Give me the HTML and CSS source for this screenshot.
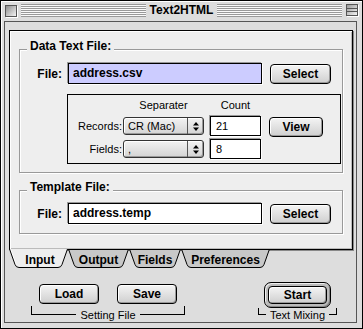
FILE: index.html
```html
<!DOCTYPE html>
<html>
<head>
    <meta charset="UTF-8">
    <title>Text2HTML</title>
    <link rel="stylesheet" href="styles.css">
</head>
<body>
    <div class="window">
        <div class="titlebar">
            <span class="close-box"></span>
            <span class="stripes"></span>
            <span class="title">Text2HTML</span>
            <span class="stripes"></span>
            <span class="collapse-box"></span>
        </div>
        <div class="frame">
            <div class="content">
                <div class="tab-panel">
                    <fieldset class="group">
                        <legend>Data Text File:</legend>
                        <div class="file-row">
                            <label>File:</label>
                            <div class="field selected">address.csv</div>
                            <button class="btn">Select</button>
                        </div>
                        <div class="sep-box">
                            <span></span>
                            <span class="head head-sep">Separater</span>
                            <span class="head head-count">Count</span>
                            <span></span>

                            <label>Records:</label>
                            <div class="popup">
                                <span class="popup-text">CR (Mac)</span>
                                <span class="popup-arrows">
                                    <svg width="6" height="11" viewBox="0 0 6 11"><polygon points="0,4.5 3,1 6,4.5" fill="#000"/><polygon points="0,6.5 3,10 6,6.5" fill="#000"/></svg>
                                </span>
                            </div>
                            <div class="field count">21</div>
                            <button class="btn btn-view">View</button>

                            <label>Fields:</label>
                            <div class="popup">
                                <span class="popup-text">,</span>
                                <span class="popup-arrows">
                                    <svg width="6" height="11" viewBox="0 0 6 11"><polygon points="0,4.5 3,1 6,4.5" fill="#000"/><polygon points="0,6.5 3,10 6,6.5" fill="#000"/></svg>
                                </span>
                            </div>
                            <div class="field count">8</div>
                            <span></span>
                        </div>
                    </fieldset>

                    <fieldset class="group group-template">
                        <legend>Template File:</legend>
                        <div class="file-row">
                            <label>File:</label>
                            <div class="field">address.temp</div>
                            <button class="btn">Select</button>
                        </div>
                    </fieldset>
                </div>

                <div class="tabs">
                    <div class="tab tab-input">
                        <svg width="59" height="19" viewBox="0 0 59 19">
                            <path d="M0.5,0 L6,15.5 Q7,18.5 10,18.5 L49,18.5 Q52,18.5 53,15.5 L58.5,0 Z" fill="#eee"/>
                            <path d="M1.5,0 L7,15.5" stroke="#fff" fill="none"/>
                            <path d="M0.5,0 L6,15.5 Q7,18.5 10,18.5 L49,18.5 Q52,18.5 53,15.5 L58.5,0" stroke="#000" fill="none"/>
                        </svg>
                        <span>Input</span>
                    </div>
                    <div class="tab tab-output">
                        <svg width="61" height="19" viewBox="0 0 61 19">
                            <path d="M0.5,0 L6,15.5 Q7,18.5 10,18.5 L51,18.5 Q54,18.5 55,15.5 L60.5,0 Z" fill="#c8c8c8"/>
                            <path d="M0.5,0 L6,15.5 Q7,18.5 10,18.5 L51,18.5 Q54,18.5 55,15.5 L60.5,0" stroke="#000" fill="none"/>
                            <path d="M0,0.5 H61" stroke="#000"/>
                        </svg>
                        <span>Output</span>
                    </div>
                    <div class="tab tab-fields">
                        <svg width="52" height="19" viewBox="0 0 52 19">
                            <path d="M0.5,0 L6,15.5 Q7,18.5 10,18.5 L42,18.5 Q45,18.5 46,15.5 L51.5,0 Z" fill="#c8c8c8"/>
                            <path d="M0.5,0 L6,15.5 Q7,18.5 10,18.5 L42,18.5 Q45,18.5 46,15.5 L51.5,0" stroke="#000" fill="none"/>
                            <path d="M0,0.5 H52" stroke="#000"/>
                        </svg>
                        <span>Fields</span>
                    </div>
                    <div class="tab tab-prefs">
                        <svg width="89" height="19" viewBox="0 0 89 19">
                            <path d="M0.5,0 L6,15.5 Q7,18.5 10,18.5 L79,18.5 Q82,18.5 83,15.5 L88.5,0 Z" fill="#c8c8c8"/>
                            <path d="M0.5,0 L6,15.5 Q7,18.5 10,18.5 L79,18.5 Q82,18.5 83,15.5 L88.5,0" stroke="#000" fill="none"/>
                            <path d="M0,0.5 H89" stroke="#000"/>
                        </svg>
                        <span>Preferences</span>
                    </div>
                </div>

                <div class="bottom">
                    <div class="setting">
                        <div class="btn-row">
                            <button class="btn btn-wide">Load</button>
                            <button class="btn btn-wide">Save</button>
                        </div>
                        <div class="bracket">
                            <i class="seg"></i>
                            <span>Setting File</span>
                            <i class="seg"></i>
                        </div>
                    </div>
                    <div class="mixing">
                        <div class="btn-row">
                            <div class="default-ring">
                                <button class="btn btn-start">Start</button>
                            </div>
                        </div>
                        <div class="bracket">
                            <i class="seg"></i>
                            <span>Text Mixing</span>
                            <i class="seg"></i>
                        </div>
                    </div>
                </div>
            </div>
        </div>
    </div>
</body>
</html>
```

FILE: styles.css
```css
* {
    margin: 0;
    padding: 0;
    box-sizing: border-box;
}

body {
    font-family: "Liberation Sans", Arial, sans-serif;
    font-size: 11px;
    color: #000;
    background: #fff;
}

.window {
    width: 363px;
    height: 329px;
    border: 1px solid #000;
    background: #ddd;
    box-shadow: inset 1px 1px 0 #fff;
    display: flex;
    flex-direction: column;
}

/* title bar */

.titlebar {
    height: 18px;
    display: flex;
    align-items: flex-start;
    gap: 4px;
    padding: 3px 4px 0;
}

.close-box,
.collapse-box {
    width: 12px;
    height: 12px;
    border: 1px solid #555;
    box-shadow: 1px 1px 0 #fff;
}

.close-box {
    margin-top: 1px;
    background: linear-gradient(135deg, #8c8c8c, #f4f4f4);
}

.collapse-box {
    background:
        linear-gradient(to bottom, transparent 3px, #555 3px 4px, transparent 4px 6px, #555 6px 7px, transparent 7px),
        linear-gradient(135deg, #9a9a9a, #f4f4f4);
}

.stripes {
    flex: 1;
    height: 13px;
    background: repeating-linear-gradient(to bottom, #999 0 1px, #fafafa 1px 2px);
}

.title {
    font-weight: bold;
    font-size: 12px;
    line-height: 13px;
}

/* window body */

.frame {
    flex: 1;
    padding: 2px 5px 5px 3px;
}

.content {
    height: 100%;
    border: 1px solid #555;
    background: #ddd;
    padding: 8px 3px 0 4px;
}

.tab-panel {
    border: 1px solid #000;
    background: #eee;
    padding: 9px 9px 15px;
    box-shadow: inset 1px 1px 0 #fff, inset -1px -1px 0 #bbb, 1px 1px 0 #888;
}

.group {
    border: 1px solid #999;
    padding: 0 0 8px;
    min-width: 0;
    box-shadow: 1px 1px 0 #fff, inset 1px 1px 0 #fff;
}

.group + .group {
    margin-top: 8px;
}

.group legend {
    margin-left: 7px;
    padding: 0 3px 7px;
    font-weight: bold;
    font-size: 12px;
    line-height: 12px;
    background: #eee;
}

.group-template {
    padding-bottom: 9px;
}

.file-row {
    display: flex;
    align-items: center;
    margin-top: 4px;
}

.group-template .file-row {
    margin-top: 3px;
}

.file-row label {
    width: 42px;
    margin-right: 6px;
    text-align: right;
    font-weight: bold;
    font-size: 12px;
}

.field {
    height: 21px;
    border: 1px solid #000;
    background: #fff;
    padding-left: 4px;
    line-height: 19px;
    box-shadow: -1px -1px 0 #999, 1px 1px 0 #fff;
}

.file-row .field {
    width: 194px;
    font-weight: bold;
    font-size: 12px;
}

.field.selected {
    background: #ccf;
}

.file-row .btn {
    width: 61px;
    margin-left: 8px;
}

/* separator box */

.sep-box {
    margin: 10px 1px 0 47px;
    border: 1px solid #000;
    padding: 3px 0 4px;
    display: grid;
    grid-template-columns: 55px 87px 59px 54px;
    grid-template-rows: 18px 23px 20px;
    align-items: start;
}

.head {
    line-height: 14px;
    text-align: center;
}

.head-sep {
    width: 81px;
}

.head-count {
    width: 51px;
}

.sep-box label {
    line-height: 20px;
    text-align: right;
    padding-right: 1px;
}

.popup {
    width: 81px;
    height: 18px;
    margin-top: 1px;
    display: flex;
    border: 1px solid #333;
    border-radius: 3px;
    background: linear-gradient(#f2f2f2, #d4d4d4);
    box-shadow: inset 1px 1px 0 #fff, inset -1px -1px 0 #999;
}

.popup-text {
    flex: 1;
    padding-left: 4px;
    line-height: 16px;
}

.popup-arrows {
    width: 16px;
    border-left: 1px solid #555;
    display: flex;
    align-items: center;
    justify-content: center;
}

.field.count {
    width: 51px;
    height: 20px;
    line-height: 18px;
    padding-left: 5px;
}

/* buttons */

.btn {
    height: 20px;
    border: 1px solid #000;
    border-radius: 4px;
    background: linear-gradient(#f4f4f4, #cfcfcf);
    box-shadow: inset 1px 1px 0 #fff, inset -1px -1px 0 #999;
    font-family: "Liberation Sans", Arial, sans-serif;
    font-weight: bold;
    font-size: 12px;
    line-height: 18px;
    color: #000;
}

.btn-view {
    width: 54px;
    margin-top: 1px;
}

.btn-wide {
    width: 60px;
}

.default-ring {
    border: 1px solid #000;
    border-radius: 7px;
    padding: 3px;
    background: #bbb;
    box-shadow: inset 1px 1px 0 #eee, inset -1px -1px 0 #888;
}

.btn-start {
    display: block;
    width: 59px;
    height: 18px;
    line-height: 16px;
}

/* tabs */

.tabs {
    display: flex;
    height: 19px;
    margin-top: -1px;
}

.tab {
    position: relative;
    height: 19px;
    font-weight: bold;
    font-size: 12px;
    text-align: center;
}

.tab svg {
    position: absolute;
    left: 0;
    top: 0;
}

.tab span {
    position: relative;
    display: block;
    padding-top: 3px;
    line-height: 16px;
}

.tab-input { width: 59px; }
.tab-input span { padding-left: 3px; }
.tab-output { width: 61px; }
.tab-fields { width: 52px; }
.tab-prefs { width: 89px; }

/* bottom controls */

.bottom {
    display: flex;
    gap: 73px;
    margin-top: 14px;
    padding-left: 22px;
}

.setting {
    width: 154px;
}

.mixing {
    width: 79px;
}

.btn-row {
    display: flex;
}

.setting .btn-row {
    height: 24px;
    gap: 18px;
    padding: 2px 0 0 8px;
}

.mixing .btn-row {
    height: 26px;
    padding-left: 6px;
}

.bracket {
    display: flex;
    align-items: flex-end;
    height: 9px;
}

.mixing .bracket {
    height: 7px;
}

.bracket .seg {
    flex: 1;
    height: 100%;
    border-bottom: 1px solid #000;
}

.bracket .seg:first-child {
    border-left: 1px solid #000;
}

.bracket .seg:last-child {
    border-right: 1px solid #000;
}

.bracket span {
    padding: 0 4px;
    line-height: 12px;
    margin-bottom: -6px;
}
```
